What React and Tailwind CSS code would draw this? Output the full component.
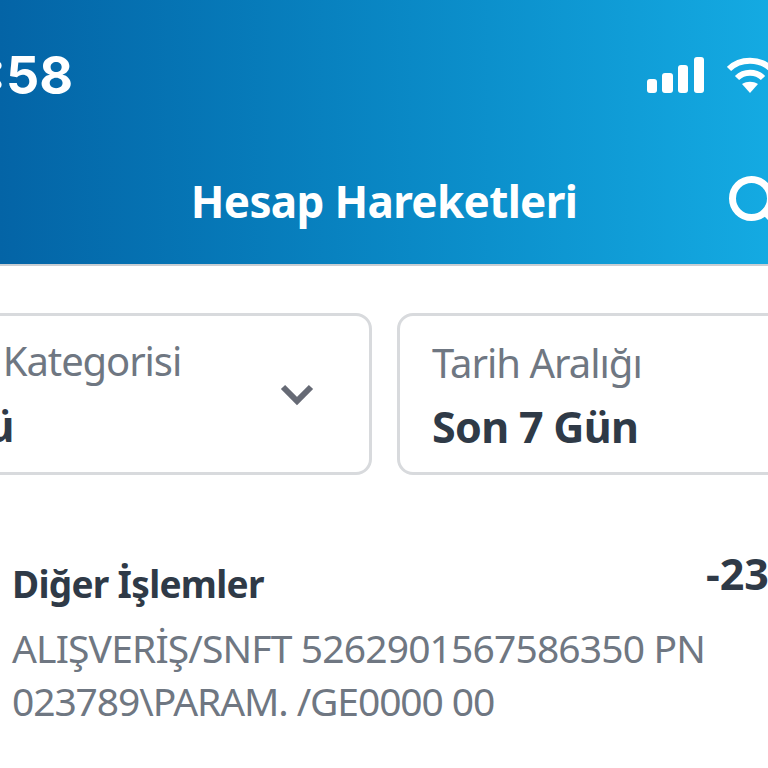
export default function App() {
  return (
    <div className="w-[768px] h-[768px] overflow-hidden bg-white font-['Noto_Sans','Lato',sans-serif]">
      <header className="h-[266px] border-b-2 border-[#c9ced3] bg-gradient-to-r from-[#0464a6] to-[#14aae2] flex flex-col text-white">
        <div className="h-[152px] pt-[48px] flex justify-between">
          <span className="ml-[-45px] font-['Inter',sans-serif] font-bold text-[52px] leading-[56px] w-[120px] shrink-0 whitespace-nowrap">3:58</span>
          <div className="flex items-start gap-[23px] mr-[-5px] pt-[9px]">
            <svg width="57" height="36" viewBox="0 0 57 36" fill="#fff">
              <rect x="0" y="22" width="10" height="14" rx="3" />
              <rect x="15" y="16" width="11" height="20" rx="3" />
              <rect x="31" y="8" width="10" height="28" rx="3" />
              <rect x="47" y="0" width="10" height="36" rx="3" />
            </svg>
            <svg width="46" height="36" viewBox="0 0 46 36" fill="none" stroke="#fff" strokeWidth="6">
              <path d="M2 12C13 1 33 1 44 12" />
              <path d="M10 21C17 14 29 14 36 21" />
              <path d="M23 36L15 27C20 24 26 24 31 27Z" fill="#fff" stroke="none" />
            </svg>
          </div>
        </div>
        <div className="flex-1 relative flex items-start justify-center pt-[22px]">
          <h1 className="text-[44px] leading-[54px] font-bold tracking-[-0.65px] whitespace-nowrap">Hesap Hareketleri</h1>
          <svg className="absolute left-[729px] top-[24px]" width="60" height="60" viewBox="0 0 60 60" fill="none" stroke="#fff" strokeWidth="7">
            <circle cx="22.500" cy="22.500" r="19" />
            <path d="M36 36L52 52" strokeLinecap="round" />
          </svg>
        </div>
      </header>

      <div className="flex gap-[25px] ml-[-135px] mt-[47px] w-[1039px]">
        <div className="w-[507px] h-[162px] shrink-0 rounded-[16px] border-[3px] border-[#d8dadd] pl-[28px] pr-[55px] pt-[24px] flex items-center justify-between">
          <div className="-mt-[20px]">
            <div className="text-[40px] leading-[50px] tracking-[-1.1px] text-[#6f7782] whitespace-nowrap">İşlem Kategorisi</div>
            <div className="mt-[10px] text-[43px] leading-[60px] font-bold tracking-[-0.7px] text-[#2f3a47] whitespace-nowrap">Tümü</div>
          </div>
          <svg className="-mt-[20px]" width="34" height="24" viewBox="0 0 34 24" fill="none" stroke="#666a75" strokeWidth="6">
            <path d="M3 3L17 17L31 3" />
          </svg>
        </div>
        <div className="w-[507px] h-[162px] shrink-0 rounded-[16px] border-[3px] border-[#d8dadd] pl-[32px] pt-[22px]">
          <div className="text-[40px] leading-[50px] tracking-[-1px] text-[#6f7782] whitespace-nowrap">Tarih Aralığı</div>
          <div className="mt-[9px] text-[43px] leading-[60px] font-bold tracking-[-0.7px] text-[#2f3a47] whitespace-nowrap">Son 7 Gün</div>
        </div>
      </div>

      <div className="mt-[84px] pl-[12px] flex justify-between w-[768px]">
        <div className="w-[700px] shrink-0">
          <div className="text-[37px] leading-[50px] font-bold tracking-[-0.7px] text-[#2f3a47] whitespace-nowrap">Diğer İşlemler</div>
          <div className="mt-[12px] text-[39px] leading-[53px] tracking-[-0.85px] text-[#6f7782] whitespace-nowrap">ALIŞVERİŞ/SNFT 5262901567586350 PN</div>
          <div className="text-[39px] leading-[53px] tracking-[-1.1px] text-[#6f7782] whitespace-nowrap">023789\PARAM. /GE0000 00</div>
        </div>
        <div className="ml-[-6px] -mt-[7px] text-[43px] leading-[44px] font-bold text-[#2f3a47] whitespace-nowrap">-23,00 TL</div>
      </div>
    </div>
  );
}
